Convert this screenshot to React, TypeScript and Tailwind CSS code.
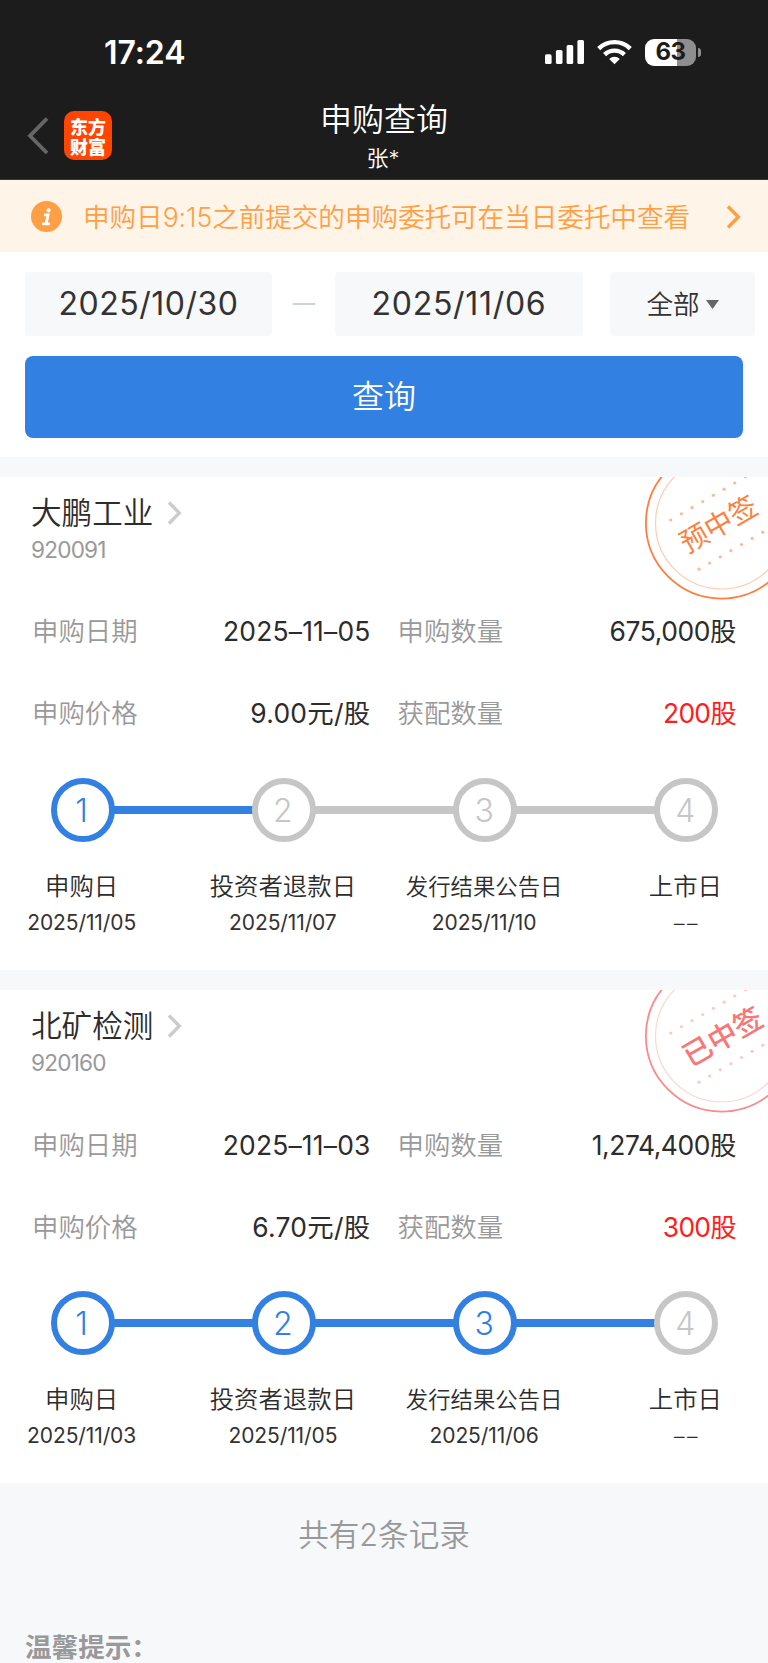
import React from 'react'

interface Step {
  label: string
  date: string
  lineActive?: boolean
  active: boolean
}

interface Subscription {
  name: string
  code: string
  date: string
  quantity: string
  price: string
  allotted: string
  stamp: string
  stampStyle: 'pending' | 'won'
  steps: Step[]
}

const records: Subscription[] = [
  {
    name: '大鹏工业',
    code: '920091',
    date: '2025–11–05',
    quantity: '675,000股',
    price: '9.00元/股',
    allotted: '200股',
    stamp: '预中签',
    stampStyle: 'pending',
    steps: [
      { label: '申购日', date: '2025/11/05', active: true, lineActive: true },
      { label: '投资者退款日', date: '2025/11/07', active: false },
      { label: '发行结果公告日', date: '2025/11/10', active: false },
      { label: '上市日', date: '––', active: false },
    ],
  },
  {
    name: '北矿检测',
    code: '920160',
    date: '2025–11–03',
    quantity: '1,274,400股',
    price: '6.70元/股',
    allotted: '300股',
    stamp: '已中签',
    stampStyle: 'won',
    steps: [
      { label: '申购日', date: '2025/11/03', active: true, lineActive: true },
      { label: '投资者退款日', date: '2025/11/05', active: true, lineActive: true },
      { label: '发行结果公告日', date: '2025/11/06', active: true, lineActive: true },
      { label: '上市日', date: '––', active: false },
    ],
  },
]

const StatusBar = () => (
  <div className="flex h-[104px] items-center justify-between pl-[104px] pr-[67px]">
    <span className="pt-[2px] text-[32px] font-semibold leading-none tracking-[-0.1px]">17:24</span>
    <div className="flex items-center">
      <svg width="40" height="26" viewBox="0 0 40 26" fill="#fff">
        <rect x="0" y="15.3" width="6.6" height="9.7" rx="1.6" />
        <rect x="10.9" y="11" width="6.6" height="14" rx="1.6" />
        <rect x="21.6" y="6" width="6.6" height="19" rx="1.6" />
        <rect x="32.4" y="1" width="6.6" height="24" rx="1.6" />
      </svg>
      <svg className="ml-[12px]" width="35" height="26" viewBox="0 0 35 26" fill="none" stroke="#fff" strokeWidth="4.4">
        <path d="M1.7 9.6a22.6 22.6 0 0 1 31.6 0" />
        <path d="M7.6 15.6a14.2 14.2 0 0 1 19.8 0" />
        <path d="M17.5 25.2l-5.3-5.2a7.4 7.4 0 0 1 10.6 0z" fill="#fff" stroke="none" />
      </svg>
      <div className="ml-[13px] flex h-[27px] w-[51px] items-center justify-center rounded-[9px] bg-[linear-gradient(90deg,#fff_63%,#8e8e8e_63%)] text-[24px] font-bold leading-none tracking-[-0.5px] text-[#1c1c1c]">
        63
      </div>
      <div className="ml-[2px] h-[9px] w-[3px] rounded-r-full bg-[#8e8e8e]" />
    </div>
  </div>
)

const Header = () => (
  <header className="h-[180px] border-b border-[#3a3835] bg-[#1c1c1c] text-white">
    <StatusBar />
    <div className="grid h-[75px] grid-cols-[1fr_auto_1fr]">
      <div className="flex items-start pl-[27px] pt-[7px]">
        <svg className="mt-[6px]" width="22" height="37" viewBox="0 0 22 37" fill="none" stroke="#666" strokeWidth="3.8">
          <path d="M20 1.5L3 18.8L20 36" />
        </svg>
        <div className="ml-[15px] flex h-[49px] w-[48px] items-center justify-center rounded-[10px] bg-[#ff4500] text-center font-['Noto_Sans_CJK_SC',sans-serif] text-[18px] font-black leading-[20px]">
          <p>
            东方
            <br />
            财富
          </p>
        </div>
      </div>
      <div className="-mt-px text-center font-[350]">
        <h1 className="text-[32px] leading-[34px]">申购查询</h1>
        <p className="mt-[6px] pr-[2px] text-[22px] leading-[30px]">张*</p>
      </div>
    </div>
  </header>
)

const Chevron = ({ color, className = '' }: { color: string; className?: string }) => (
  <svg className={className} width="15" height="24" viewBox="0 0 15 24" fill="none" stroke={color} strokeWidth="3.4">
    <path d="M2 1.5L12.3 12L2 22.5" />
  </svg>
)

const Notice = () => (
  <div className="flex h-[72px] items-center bg-[#fff4e8] pl-[31px] pr-[27px] text-[#ff9f45]">
    <svg width="31" height="31" viewBox="0 0 31 31">
      <circle cx="15.5" cy="15.5" r="15.5" fill="#ff9f45" />
      <circle cx="17.6" cy="9.3" r="2.1" fill="#fff" />
      <path d="M12.9 13.9h4.2l-2 9M11.1 22.9h7.8" fill="none" stroke="#fff" strokeWidth="2.8" />
    </svg>
    <p className="ml-[21px] flex-1 whitespace-nowrap pt-[3px] text-[26.6px] font-[350] tracking-[-0.05px]">
      申购日9:15之前提交的申购委托可在当日委托中查看
    </p>
    <Chevron color="#ff9f45" className="mt-px" />
  </div>
)

const SearchForm = () => (
  <section className="h-[205px] bg-white pt-[20px] text-[#333]">
    <div className="flex h-[64px] items-center pl-[25px] text-[32px]">
      <div className="flex h-full w-[247px] items-center justify-center rounded-[4px] bg-[#f7f8fa] tracking-[0.5px]">2025/10/30</div>
      <div className="ml-[21px] mr-[20px] h-[2px] w-[22px] bg-[#ccd3da]" />
      <div className="flex h-full w-[248px] items-center justify-center rounded-[4px] bg-[#f7f8fa] tracking-[0.7px]">2025/11/06</div>
      <div className="ml-[27px] flex h-full w-[145px] items-center justify-center gap-[6px] rounded-[4px] bg-[#f7f8fa] text-[26.6px] font-[350]">
        <span className="pt-px">全部</span>
        <svg width="13" height="9" viewBox="0 0 13 9" fill="#666">
          <path d="M0 0h13L6.5 9z" />
        </svg>
      </div>
    </div>
    <button className="ml-[25px] mt-[20px] block h-[82px] w-[718px] rounded-[8px] bg-[#3380e3] text-[32px] font-[350] text-white">
      查询
    </button>
  </section>
)

const stampColors = {
  pending: { ring: '#ff7f40', inner: '#ffccb3', dot: '#ffb894', text: '#ff7f40', weight: 400, size: 28 },
  won: { ring: '#fb8a8a', inner: '#fdd5d5', dot: '#fcc8c8', text: '#fa7676', weight: 500, size: 29 },
}

const Stamp = ({ text, type }: { text: string; type: 'pending' | 'won' }) => {
  const c = stampColors[type]
  const dots = [0, 1, 2, 3, 4, 5, 6, 7]
  return (
    <svg className="absolute right-0 top-0" width="128" height="128" viewBox="640 0 128 128">
      <circle cx="721.5" cy="46" r="75.6" fill="none" stroke={c.ring} strokeWidth="1.8" />
      <circle cx="721.5" cy="46" r="66" fill="none" stroke={c.inner} strokeWidth="1.2" />
      {dots.map((i) => (
        <circle key={i} cx={670.7 + i * 10.67} cy={43 - i * 6.17} r="1.6" fill={c.dot} />
      ))}
      {dots.slice(0, 7).map((i) => (
        <circle key={i} cx={699 + i * 10.62} cy={92.2 - i * 6.17} r="1.6" fill={c.dot} />
      ))}
      <text
        transform={type === 'pending' ? 'translate(718.5 47) rotate(-30)' : 'translate(722.5 46.5) rotate(-30)'}
        y={c.size * 0.37}
        textAnchor="middle"
        fontSize={c.size}
        fontWeight={c.weight}
        fill={c.text}
      >
        {text}
      </text>
    </svg>
  )
}

const StepItem = ({ step, index, last }: { step: Step; index: number; last: boolean }) => (
  <div className="relative flex flex-1 flex-col items-center whitespace-nowrap">
    {!last && (
      <div
        className={`absolute left-1/2 top-[28px] h-[8px] w-full ${step.lineActive ? 'bg-[#3380e3]' : 'bg-[#c6c6c6]'}`}
      />
    )}
    <div
      className={`relative z-10 flex h-[64px] w-[64px] items-center justify-center rounded-full border-[6px] bg-white pr-[2px] pt-px text-[32px] font-light ${
        step.active ? 'border-[#3380e3] text-[#3380e3]' : 'border-[#c6c6c6] text-[#c6c6c6]'
      }`}
    >
      {index + 1}
    </div>
    <div className={`mt-[26px] h-[36px] pr-[2px] leading-[36px] ${step.label.length > 6 ? 'pt-px text-[22.4px]' : 'text-[24.4px]'}`}>
      {step.label}
    </div>
    {step.date === '––' ? (
      <div className="mt-[5px] pl-px text-[21px] leading-[30px] tracking-[2.5px]">{step.date}</div>
    ) : (
      <div className="mt-[4px] pr-[2px] text-[21px] font-normal leading-[30px] tracking-[-0.1px] text-[#333]">{step.date}</div>
    )}
  </div>
)

const Field = ({ label, value, valueClass }: { label: string; value: string; valueClass: string }) => (
  <div className="flex flex-1 items-center justify-between">
    <span className="font-[350] text-[#999]">{label}</span>
    <span className={valueClass}>{value}</span>
  </div>
)

const RecordCard = ({ record }: { record: Subscription }) => (
  <section className="relative h-[493px] overflow-hidden bg-white text-[#2c2c2c]">
    <Stamp text={record.stamp} type={record.stampStyle} />
    <div className="flex items-center pl-[31px] pt-[16px]">
      <h2 className="text-[30.6px] font-[350] leading-[40px]">{record.name}</h2>
      <Chevron color="#ccc" className="ml-[14px]" />
    </div>
    <p className="pl-[31px] text-[22.6px] leading-[34px] tracking-[-0.8px] text-[#999]">{record.code}</p>

    <div className="mt-[24px] text-[26.4px]">
      <div className="flex h-[82px] gap-[27px] pl-[32px] pr-[32px]">
        <Field label="申购日期" value={record.date} valueClass="tracking-[0.2px]" />
        <Field label="申购数量" value={record.quantity} valueClass="tracking-[-0.4px]" />
      </div>
      <div className="flex h-[82px] gap-[27px] pl-[32px] pr-[32px]">
        <Field label="申购价格" value={record.price} valueClass="tracking-[0.3px]" />
        <Field label="获配数量" value={record.allotted} valueClass="text-[#ff1d1d] tracking-[-0.7px]" />
      </div>
    </div>

    <div className="-ml-[18px] mt-[23px] flex w-[805px] font-[350]">
      {record.steps.map((step, i) => (
        <StepItem key={step.label} step={step} index={i} last={i === record.steps.length - 1} />
      ))}
    </div>
  </section>
)

export default function App() {
  return (
    <div className="h-[1663px] w-[768px] overflow-hidden bg-[#f7f8fa] font-['Inter','Noto_Sans_CJK_SC',sans-serif]">
      <Header />
      <Notice />
      <SearchForm />
      <div className="mt-[20px] flex flex-col gap-[20.4px]">
        {records.map((record) => (
          <RecordCard key={record.code} record={record} />
        ))}
      </div>
      <footer className="text-[#999]">
        <p className="pt-[32px] text-center text-[30.6px] font-[350] leading-[40px]">共有{records.length}条记录</p>
        <p className="mt-[73px] pl-[25px] text-[26.6px] font-bold leading-[38px]">温馨提示：</p>
      </footer>
    </div>
  )
}
